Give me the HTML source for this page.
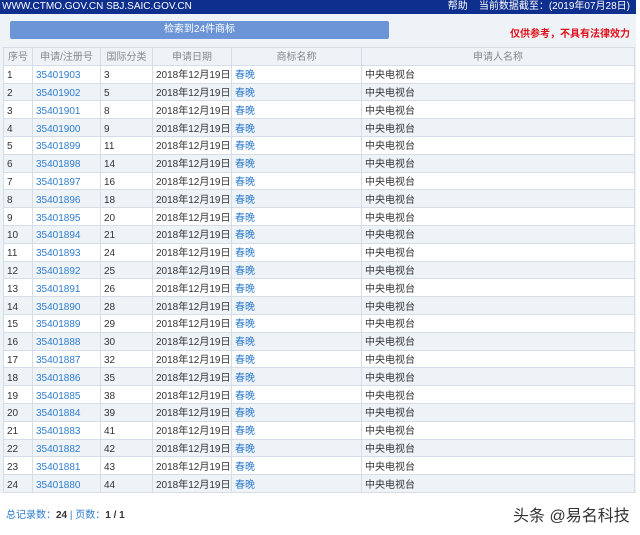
<!DOCTYPE html>
<html><head><meta charset="utf-8"><style>
*{margin:0;padding:0;box-sizing:border-box}
body{width:640px;height:535px;background:#fff;font-family:"Liberation Sans","Noto Sans CJK SC",sans-serif;font-size:10px;color:#333;position:relative;overflow:hidden}
.top{position:absolute;left:0;top:0;width:636px;height:14px;background:#0f2f8f;color:#fff;font-size:10px;line-height:14px}
.top .l{position:absolute;left:2px}
.top .r{position:absolute;right:6px}
.area{position:absolute;left:0;top:14px;width:636px;height:479px;background:#eef3f8}
.btn{position:absolute;left:10px;top:21px;width:379px;height:18px;background:#6b95d6;border-radius:2px;color:#fff;text-align:center;line-height:18px;font-size:10px}
.warn{position:absolute;right:10px;top:25px;color:#e0101a;font-size:10px;font-weight:bold}
table{position:absolute;left:3px;top:47px;width:632px;border-collapse:collapse;table-layout:fixed}
td,th{border:1px solid #d6dde6;height:17.8px;padding:0 3px;font-weight:normal;white-space:nowrap;font-size:10px;line-height:12px;vertical-align:middle}
td span,th span,td a{position:relative;top:2px}
th{color:#888;text-align:center;background:#eef3f8}
tr:nth-child(odd) td{background:#eef3f8}
tr:nth-child(even) td{background:#fff}
a{color:#2f7ccc}
.foot{position:absolute;left:6px;top:506px;font-size:10px;color:#2f7ccc}
.foot b{color:#333}
.wm{position:absolute;left:513px;top:502px;font-size:16px;color:#333}
</style></head><body>
<div class="top"><span class="l">WWW.CTMO.GOV.CN SBJ.SAIC.GOV.CN</span><span class="r">帮助&nbsp;&nbsp;&nbsp;&nbsp;当前数据截至：(2019年07月28日)</span></div>
<div class="area"></div>
<div class="btn">检索到24件商标</div>
<div class="warn">仅供参考，不具有法律效力</div>
<table>
<colgroup><col style="width:29px"><col style="width:68px"><col style="width:52px"><col style="width:79px"><col style="width:130px"><col></colgroup>
<tr><th><span>序号</span></th><th><span>申请/注册号</span></th><th><span>国际分类</span></th><th><span>申请日期</span></th><th><span>商标名称</span></th><th><span>申请人名称</span></th></tr>
<tr><td><span>1</span></td><td><a>35401903</a></td><td><span>3</span></td><td><span>2018年12月19日</span></td><td><a>春晚</a></td><td><span>中央电视台</span></td></tr>
<tr><td><span>2</span></td><td><a>35401902</a></td><td><span>5</span></td><td><span>2018年12月19日</span></td><td><a>春晚</a></td><td><span>中央电视台</span></td></tr>
<tr><td><span>3</span></td><td><a>35401901</a></td><td><span>8</span></td><td><span>2018年12月19日</span></td><td><a>春晚</a></td><td><span>中央电视台</span></td></tr>
<tr><td><span>4</span></td><td><a>35401900</a></td><td><span>9</span></td><td><span>2018年12月19日</span></td><td><a>春晚</a></td><td><span>中央电视台</span></td></tr>
<tr><td><span>5</span></td><td><a>35401899</a></td><td><span>11</span></td><td><span>2018年12月19日</span></td><td><a>春晚</a></td><td><span>中央电视台</span></td></tr>
<tr><td><span>6</span></td><td><a>35401898</a></td><td><span>14</span></td><td><span>2018年12月19日</span></td><td><a>春晚</a></td><td><span>中央电视台</span></td></tr>
<tr><td><span>7</span></td><td><a>35401897</a></td><td><span>16</span></td><td><span>2018年12月19日</span></td><td><a>春晚</a></td><td><span>中央电视台</span></td></tr>
<tr><td><span>8</span></td><td><a>35401896</a></td><td><span>18</span></td><td><span>2018年12月19日</span></td><td><a>春晚</a></td><td><span>中央电视台</span></td></tr>
<tr><td><span>9</span></td><td><a>35401895</a></td><td><span>20</span></td><td><span>2018年12月19日</span></td><td><a>春晚</a></td><td><span>中央电视台</span></td></tr>
<tr><td><span>10</span></td><td><a>35401894</a></td><td><span>21</span></td><td><span>2018年12月19日</span></td><td><a>春晚</a></td><td><span>中央电视台</span></td></tr>
<tr><td><span>11</span></td><td><a>35401893</a></td><td><span>24</span></td><td><span>2018年12月19日</span></td><td><a>春晚</a></td><td><span>中央电视台</span></td></tr>
<tr><td><span>12</span></td><td><a>35401892</a></td><td><span>25</span></td><td><span>2018年12月19日</span></td><td><a>春晚</a></td><td><span>中央电视台</span></td></tr>
<tr><td><span>13</span></td><td><a>35401891</a></td><td><span>26</span></td><td><span>2018年12月19日</span></td><td><a>春晚</a></td><td><span>中央电视台</span></td></tr>
<tr><td><span>14</span></td><td><a>35401890</a></td><td><span>28</span></td><td><span>2018年12月19日</span></td><td><a>春晚</a></td><td><span>中央电视台</span></td></tr>
<tr><td><span>15</span></td><td><a>35401889</a></td><td><span>29</span></td><td><span>2018年12月19日</span></td><td><a>春晚</a></td><td><span>中央电视台</span></td></tr>
<tr><td><span>16</span></td><td><a>35401888</a></td><td><span>30</span></td><td><span>2018年12月19日</span></td><td><a>春晚</a></td><td><span>中央电视台</span></td></tr>
<tr><td><span>17</span></td><td><a>35401887</a></td><td><span>32</span></td><td><span>2018年12月19日</span></td><td><a>春晚</a></td><td><span>中央电视台</span></td></tr>
<tr><td><span>18</span></td><td><a>35401886</a></td><td><span>35</span></td><td><span>2018年12月19日</span></td><td><a>春晚</a></td><td><span>中央电视台</span></td></tr>
<tr><td><span>19</span></td><td><a>35401885</a></td><td><span>38</span></td><td><span>2018年12月19日</span></td><td><a>春晚</a></td><td><span>中央电视台</span></td></tr>
<tr><td><span>20</span></td><td><a>35401884</a></td><td><span>39</span></td><td><span>2018年12月19日</span></td><td><a>春晚</a></td><td><span>中央电视台</span></td></tr>
<tr><td><span>21</span></td><td><a>35401883</a></td><td><span>41</span></td><td><span>2018年12月19日</span></td><td><a>春晚</a></td><td><span>中央电视台</span></td></tr>
<tr><td><span>22</span></td><td><a>35401882</a></td><td><span>42</span></td><td><span>2018年12月19日</span></td><td><a>春晚</a></td><td><span>中央电视台</span></td></tr>
<tr><td><span>23</span></td><td><a>35401881</a></td><td><span>43</span></td><td><span>2018年12月19日</span></td><td><a>春晚</a></td><td><span>中央电视台</span></td></tr>
<tr><td><span>24</span></td><td><a>35401880</a></td><td><span>44</span></td><td><span>2018年12月19日</span></td><td><a>春晚</a></td><td><span>中央电视台</span></td></tr>
</table>
<div class="foot">总记录数：<b>24</b> | 页数：<b>1 / 1</b></div>
<div class="wm">头条 @易名科技</div>
</body></html>
